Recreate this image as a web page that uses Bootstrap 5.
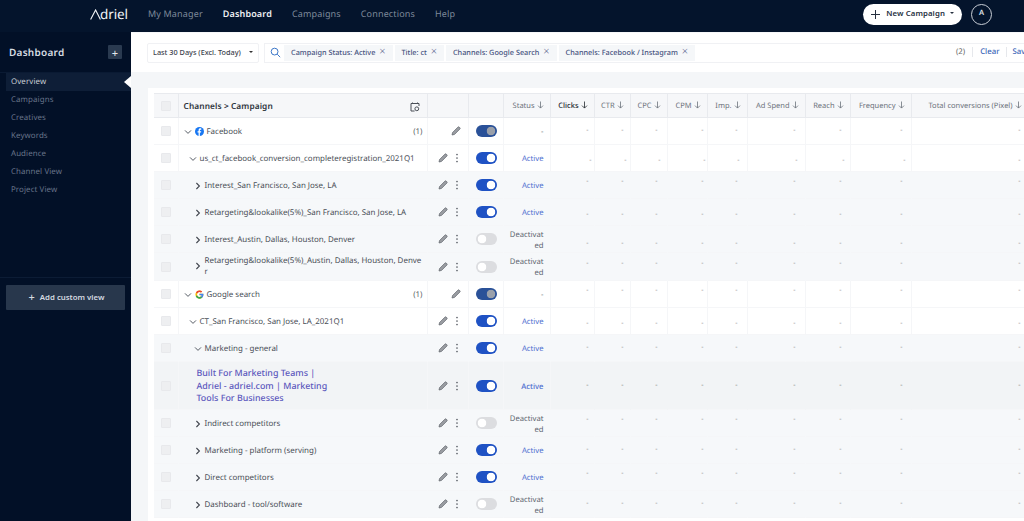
<!doctype html>
<html lang="en">
<head>
<meta charset="utf-8">
<title>Adriel Dashboard</title>
<link href="https://cdn.jsdelivr.net/npm/bootstrap@5.3.0/dist/css/bootstrap.min.css" rel="stylesheet">
<style>
html,body{height:100%}
body{font-family:"Noto Sans",sans-serif;font-size:8px;color:#4a4f57;background:#fff;overflow:hidden;text-rendering:geometricPrecision}
.topbar{height:32px;background:#04142c;padding:0 0 4px;flex-wrap:nowrap}
.brand{width:148px;padding:0 0 0 90px;margin:0;color:#f2f4f7;font-size:13.5px;line-height:18px;letter-spacing:-.1px;display:flex;align-items:center}
.brand svg{width:11px;height:11px;margin-right:-1px}
.topbar .nav-link{padding:0;font-size:9px;color:#7f8a9b;letter-spacing:.15px;line-height:14px}
.topbar .nav-link.active{color:#eef0f3;font-weight:600}
.topnav{gap:20px}
.new-btn{height:21px;width:99px;background:#fff;border-radius:11px;border:0;color:#26303f;font-size:7.8px;font-weight:600;padding:0;letter-spacing:.1px}
.new-btn::after{border-width:2px 2px 0;margin-left:5px;vertical-align:2px}
.avatar{width:21px;height:21px;border:1px solid #c9ced6;color:#dfe3e8;font-size:7.5px;font-weight:600;margin:0 32px 0 9px}
.side{width:131px;background:#021027;flex:none;height:489px}
.side-head{height:41px;padding:0 9px 0 9px;border-bottom:1px solid #0a1a33}
.side-head h1{font-size:10px;font-weight:600;color:#d8dde3;letter-spacing:.25px;margin:0}
.plus{width:14px;height:14px;background:#2a3a50;color:#e4e8ec;border:0;border-radius:1px;padding:0;font-size:11px;line-height:13px}
.side .list-group-item{background:transparent;border:0;border-radius:0;padding:0 0 0 5px;margin-left:6px;height:18px;line-height:19px;font-size:7.9px;color:#68748a;letter-spacing:.1px}
.side .list-group-item.active{background:#0e1e37;color:#c8ced6;position:relative}
.side .list-group-item.active::after{content:"";position:absolute;right:0;top:3px;border:6px solid transparent;border-right-color:#fff;border-left-width:0;border-right-width:7px}
.side-foot{border-top:1px solid #0c1c35;padding:7px 6px 0;margin-top:auto;height:244px}
.add-btn{width:119px;height:25px;background:#28374c;color:#d5dae0;border:0;border-radius:1px;font-size:7.8px;font-weight:600;padding:0 0 0 2px}
.add-btn b{font-weight:500;font-size:11px;margin-right:3px;line-height:1;vertical-align:-1px}
.main{background:#f4f6f8;height:489px;min-width:0}
.toolbar{height:40px;background:#fff;flex:none;padding:0 0 0 16px;gap:5px;border-top:1px solid #f6f7f9}
.date{width:112px;height:20px;border:1px solid #f0f1f4;border-radius:2px;color:#3b424c;font-size:7.3px;font-weight:500;padding:0 0 0 5px;background:#fff;white-space:nowrap}
.date::after{border-width:2px 2px 0;margin-left:8px;color:#333;vertical-align:2px}
.search{height:20px;border:1px solid #f0f1f4;border-right:0;flex:1;min-width:0;padding-left:5px;white-space:nowrap}
.search svg.mag{width:11px;height:11px;margin-right:3px;flex:none}
.chip{height:16px;line-height:16px;background:#f5f7f9;color:#46527e;font-size:7.3px;font-weight:500;padding:0 7px 0 7px;margin-right:2px;flex:none;white-space:nowrap}
.chip i{font-style:normal;font-size:11px;color:#56608a;margin-left:2px;font-weight:300;line-height:1;vertical-align:-.5px}
.counts{margin-left:auto;font-size:7.8px;white-space:nowrap;width:68px;flex:none;color:#666}
.counts a{color:#3d67b9;text-decoration:none;font-weight:500;border-left:1px solid #e6e8ec;padding-left:7px}
.counts span{margin-right:7px}
.counts a+a{margin-left:7px;padding-left:5px}
.card-wrap{margin:16px 0 0 17px;padding:5px 0 0 6px;background:#fff;flex:1;overflow:hidden;border:0;border-radius:0}
table.grid{table-layout:fixed;width:874px;margin:0;border-collapse:collapse;color:#4a4f57;font-size:8px;--bs-table-bg:transparent;--bs-table-color:#4a4f57}
.grid th,.grid td{padding:0;border:0;vertical-align:middle;background:transparent;box-shadow:none}
.grid thead tr{height:24px;background:#f6f7f9}
.grid thead th{font-weight:400;color:#6c727b;font-size:7.5px;text-align:right;border:solid #e8eaee;border-width:1px 1px 1px 0;padding:3px 6px 0 0;white-space:nowrap}
.grid thead th.name{text-align:left;color:#2f353d;font-weight:600;font-size:8.3px;padding-left:5px;padding-right:7px;letter-spacing:.1px}
.grid thead th.sel{color:#23282f;font-weight:500}
.grid th svg.ar{width:7px;height:8px;vertical-align:-1px;margin-left:0}
.grid tbody tr{height:27px;border-bottom:1px solid #f5f6f8}
.grid tbody tr.h2{height:48px}
.grid tbody tr.h28{height:28px}
.grid tbody tr.alt{background:#f6f8fa}
.grid tbody tr.dk{background:#f2f4f6}
.grid tbody td{border-right:1px solid #f5f6f8}
.grid tbody td:nth-child(n+6),.grid tbody tr.alt td{border-right-color:transparent}
tr.top td:nth-child(n+5),tr.seg td:nth-child(n+5){border-right-color:#f5f6f8!important}
td.cb,th.cb{text-align:center;padding:0!important}
.box{display:block;width:10px;height:10px;background:#eeeff1;border:1px solid #e8e9ec;border-radius:1px;margin:0 auto 0 7px}
.nm{display:flex;align-items:center;width:100%;font-size:7.95px;line-height:11px;word-break:break-all;padding:3px 7px 0 0}
.h28 .nm{padding:1px 3px 0 15px}
.l1{padding-left:5px}.l2{padding-left:10px}.l3{padding-left:15px}
.chev{width:8px;height:8px;flex:none;margin:0 3px 2px 0}
.brandico{width:9px;height:9px;flex:none;margin:0 3px 2px 0}
.ct{margin-left:auto;white-space:nowrap;color:#5a5f67;margin-right:-3px}
.adname{padding:1px 0 0 18px;color:#5c58bd;font-size:8.9px;line-height:12.4px;width:153px}
.acts{display:flex;align-items:center;justify-content:flex-end;padding-right:7px;gap:5px}
.pen{width:10px;height:10px}
.dots{width:8px;height:10px}
td.tg-c{padding-left:7px!important}
.form-switch.tg-w{min-height:0;padding:0;margin:0;line-height:0}
.form-switch .form-check-input.tg{width:21px;height:12px;margin:0;float:none;border:0;border-radius:6px;background-color:#dcdde0;background-image:radial-gradient(circle,#fff 4px,transparent 4.6px);background-size:12px 12px;background-position:left center;background-repeat:no-repeat;opacity:1}
.form-switch .form-check-input.tg:checked{background-color:#1f52c4;background-position:right center}
.form-switch .form-check-input.tg.grp:checked{background-color:#2a5198;background-image:radial-gradient(circle,#9aa0aa 4px,transparent 4.6px)}
td.st{text-align:right;padding:3px 6px 0 3px!important;word-break:break-all;line-height:10.6px;font-size:7.7px;color:#5f6670}
td.st.on{color:#4f6fd0}
td.n{text-align:right;color:#888;font-size:7px;line-height:8px}
td.n:nth-child(6){padding-right:5px}
td.n:nth-child(7){padding-right:6px}
td.n:nth-child(8){padding-right:9px}
td.n:nth-child(9){padding-right:3px}
td.n:nth-child(10){padding-right:9px}
td.n:nth-child(11){padding-right:9px}
td.n:nth-child(12){padding-right:8px}
td.n:nth-child(13){padding-right:8px}
td.n:nth-child(14){padding-right:7px}
.up td.n{padding-bottom:6px}
.dn td.n{padding-top:6px}
.dn2 td.n{padding-top:9px}
.right2 td.n:nth-child(6){padding-right:2px}
.right2 td.n:nth-child(7){padding-right:3px}
.right2 td.n:nth-child(8){padding-right:6px}
.right2 td.n:nth-child(9){padding-right:1px}
.right2 td.n:nth-child(10){padding-right:7px}
.right2 td.n:nth-child(11){padding-right:7px}
.right2 td.n:nth-child(12){padding-right:5px}
.right2 td.n:nth-child(13){padding-right:5px}
</style>
</head>
<body>
<svg width="0" height="0" class="d-block" aria-hidden="true">
  <symbol id="pen" viewBox="0 0 12 12"><path d="M1.200 10.800l.7-3L8.400 1.300a1 1 0 0 1 1.400 0l.9.9a1 1 0 0 1 0 1.400L4.200 10.100z" fill="#9a9da2" stroke="#65696f" stroke-width=".9" stroke-linejoin="round"/></symbol>
  <symbol id="dots" viewBox="0 0 8 10"><circle cx="4" cy="1.500" r=".85" fill="#5c6068"/><circle cx="4" cy="5" r=".85" fill="#5c6068"/><circle cx="4" cy="8.500" r=".85" fill="#5c6068"/></symbol>
  <symbol id="cd" viewBox="0 0 8 8"><path d="M1 2.400l3 3 3-3" fill="none" stroke="#555b64" stroke-width="1"/></symbol>
  <symbol id="cr" viewBox="0 0 8 8"><path d="M2.400 1l3 3-3 3" fill="none" stroke="#40454d" stroke-width="1.100"/></symbol>
  <symbol id="ar" viewBox="0 0 7 8"><path d="M3.500.5v6.500M1 4.600l2.500 2.500L6 4.600" fill="none" stroke="currentColor" stroke-width=".8"/></symbol>
</svg>

<nav class="navbar topbar d-flex align-items-center">
  <a class="navbar-brand brand" href="#" aria-label="Adriel"><svg viewBox="0 0 11 11"><path d="M.6 10.600L5.600 1l4.800 9.600" fill="none" stroke="#f2f4f7" stroke-width="1.100"/></svg><span>driel</span></a>
  <ul class="nav topnav flex-nowrap">
    <li class="nav-item"><a class="nav-link" href="#">My Manager</a></li>
    <li class="nav-item"><a class="nav-link active" href="#">Dashboard</a></li>
    <li class="nav-item"><a class="nav-link" href="#">Campaigns</a></li>
    <li class="nav-item"><a class="nav-link" href="#">Connections</a></li>
    <li class="nav-item"><a class="nav-link" href="#">Help</a></li>
  </ul>
  <div class="ms-auto d-flex align-items-center">
    <button class="btn new-btn dropdown-toggle" type="button"><svg width="9" height="9" viewBox="0 0 9 9" class="me-1"><path d="M4.500 0v9M0 4.500h9" stroke="#26303f" stroke-width="1"/></svg> New Campaign</button>
    <div class="avatar rounded-circle d-flex align-items-center justify-content-center">A</div>
  </div>
</nav>

<div class="d-flex">
  <aside class="side d-flex flex-column">
    <div class="side-head d-flex align-items-center justify-content-between">
      <h1>Dashboard</h1>
      <button class="btn plus" type="button">+</button>
    </div>
    <div class="list-group">
      <a href="#" class="list-group-item active">Overview</a>
      <a href="#" class="list-group-item">Campaigns</a>
      <a href="#" class="list-group-item">Creatives</a>
      <a href="#" class="list-group-item">Keywords</a>
      <a href="#" class="list-group-item">Audience</a>
      <a href="#" class="list-group-item">Channel View</a>
      <a href="#" class="list-group-item">Project View</a>
    </div>
    <div class="side-foot">
      <button class="btn add-btn" type="button"><b>+</b> Add custom view</button>
    </div>
  </aside>

  <main class="main flex-grow-1 d-flex flex-column">
    <div class="toolbar d-flex align-items-center">
      <button class="btn date dropdown-toggle text-start" type="button">Last 30 Days (Excl. Today)</button>
      <div class="search d-flex align-items-center">
        <svg class="mag" viewBox="0 0 11 11"><circle cx="4.600" cy="4.600" r="3.400" fill="none" stroke="#3d78c9" stroke-width="1"/><path d="M7.200 7.200l3 3" stroke="#3d78c9" stroke-width="1"/></svg>
        <span class="chip">Campaign Status: Active <i>×</i></span>
        <span class="chip">Title: ct <i>×</i></span>
        <span class="chip">Channels: Google Search <i>×</i></span>
        <span class="chip">Channels: Facebook / Instagram <i>×</i></span>
        <div class="counts"><span>(2)</span><a href="#">Clear</a><a href="#">Save</a></div>
      </div>
    </div>

    <div class="card card-wrap">
      <table class="table grid">
        <colgroup><col style="width:24px"><col style="width:249px"><col style="width:41px"><col style="width:35px"><col style="width:47px"><col style="width:44px"><col style="width:36px"><col style="width:37px"><col style="width:40px"><col style="width:40px"><col style="width:58px"><col style="width:45px"><col style="width:61px"><col style="width:117px"></colgroup>
        <thead>
          <tr>
            <th class="cb"><span class="box"></span></th>
            <th class="name"><div class="d-flex justify-content-between align-items-center">Channels &gt; Campaign <svg width="10" height="10" viewBox="0 0 10 10"><path d="M1 1.500h8M1 1.500v7.500h3.600M9 1.500v2.500M2.500 .5v1.500M7.500 .5v1.500" fill="none" stroke="#4a4f57" stroke-width="1"/><circle cx="6.800" cy="6.800" r="1.900" fill="none" stroke="#4a4f57" stroke-width="1"/></svg></div></th>
            <th></th><th></th>
            <th>Status <svg class="ar"><use href="#ar"/></svg></th>
            <th class="sel">Clicks <svg class="ar"><use href="#ar"/></svg></th>
            <th>CTR <svg class="ar"><use href="#ar"/></svg></th>
            <th>CPC <svg class="ar"><use href="#ar"/></svg></th>
            <th>CPM <svg class="ar"><use href="#ar"/></svg></th>
            <th>Imp. <svg class="ar"><use href="#ar"/></svg></th>
            <th>Ad Spend <svg class="ar"><use href="#ar"/></svg></th>
            <th>Reach <svg class="ar"><use href="#ar"/></svg></th>
            <th>Frequency <svg class="ar"><use href="#ar"/></svg></th>
            <th>Total conversions (Pixel) <svg class="ar"><use href="#ar"/></svg></th>
          </tr>
        </thead>
        <tbody>
          <tr class="top">
            <td class="cb"><span class="box"></span></td>
            <td><div class="nm l1"><svg class="chev"><use href="#cd"/></svg><svg class="brandico" viewBox="0 0 10 10"><circle cx="5" cy="5" r="5" fill="#1877f2"/><path d="M5.400 10V6.200h1.300l.2-1.500H5.400v-.9c0-.5.2-.8.8-.8h.8V1.600C6.800 1.500 6.400 1.500 6 1.500 4.800 1.500 4 2.200 4 3.600v1.100H2.800v1.500H4V10z" fill="#fff"/></svg>Facebook<span class="ct">(1)</span></div></td>
            <td><div class="acts"><svg class="pen"><use href="#pen"/></svg></div></td>
            <td class="tg-c"><div class="form-check form-switch tg-w"><input class="form-check-input tg grp" type="checkbox" role="switch" checked aria-label="Toggle"></div></td>
            <td class="st">-</td>
            <td class="n">-</td><td class="n">-</td><td class="n">-</td><td class="n">-</td><td class="n">-</td><td class="n">-</td><td class="n">-</td><td class="n">-</td><td class="n">-</td>
          </tr>
          <tr class="seg right2 dn">
            <td class="cb"><span class="box"></span></td>
            <td><div class="nm l2"><svg class="chev"><use href="#cd"/></svg>us_ct_facebook_conversion_completeregistration_2021Q1</div></td>
            <td><div class="acts"><svg class="pen"><use href="#pen"/></svg><svg class="dots"><use href="#dots"/></svg></div></td>
            <td class="tg-c"><div class="form-check form-switch tg-w"><input class="form-check-input tg" type="checkbox" role="switch" checked aria-label="Toggle"></div></td>
            <td class="st on">Active</td>
            <td class="n">-</td><td class="n">-</td><td class="n">-</td><td class="n">-</td><td class="n">-</td><td class="n">-</td><td class="n">-</td><td class="n">-</td><td class="n">-</td>
          </tr>
          <tr class="alt up">
            <td class="cb"><span class="box"></span></td>
            <td><div class="nm l3"><svg class="chev"><use href="#cr"/></svg>Interest_San Francisco, San Jose, LA</div></td>
            <td><div class="acts"><svg class="pen"><use href="#pen"/></svg><svg class="dots"><use href="#dots"/></svg></div></td>
            <td class="tg-c"><div class="form-check form-switch tg-w"><input class="form-check-input tg" type="checkbox" role="switch" checked aria-label="Toggle"></div></td>
            <td class="st on">Active</td>
            <td class="n">-</td><td class="n">-</td><td class="n">-</td><td class="n">-</td><td class="n">-</td><td class="n">-</td><td class="n">-</td><td class="n">-</td><td class="n">-</td>
          </tr>
          <tr class="alt dn">
            <td class="cb"><span class="box"></span></td>
            <td><div class="nm l3"><svg class="chev"><use href="#cr"/></svg>Retargeting&amp;lookalike(5%)_San Francisco, San Jose, LA</div></td>
            <td><div class="acts"><svg class="pen"><use href="#pen"/></svg><svg class="dots"><use href="#dots"/></svg></div></td>
            <td class="tg-c"><div class="form-check form-switch tg-w"><input class="form-check-input tg" type="checkbox" role="switch" checked aria-label="Toggle"></div></td>
            <td class="st on">Active</td>
            <td class="n">-</td><td class="n">-</td><td class="n">-</td><td class="n">-</td><td class="n">-</td><td class="n">-</td><td class="n">-</td><td class="n">-</td><td class="n">-</td>
          </tr>
          <tr class="alt dn2">
            <td class="cb"><span class="box"></span></td>
            <td><div class="nm l3"><svg class="chev"><use href="#cr"/></svg>Interest_Austin, Dallas, Houston, Denver</div></td>
            <td><div class="acts"><svg class="pen"><use href="#pen"/></svg><svg class="dots"><use href="#dots"/></svg></div></td>
            <td class="tg-c"><div class="form-check form-switch tg-w"><input class="form-check-input tg" type="checkbox" aria-label="Toggle"></div></td>
            <td class="st">Deactivated</td>
            <td class="n">-</td><td class="n">-</td><td class="n">-</td><td class="n">-</td><td class="n">-</td><td class="n">-</td><td class="n">-</td><td class="n">-</td><td class="n">-</td>
          </tr>
          <tr class="alt up h28">
            <td class="cb"><span class="box"></span></td>
            <td><div class="nm"><svg class="chev"><use href="#cr"/></svg><span>Retargeting&amp;lookalike(5%)_Austin, Dallas, Houston, Denver</span></div></td>
            <td><div class="acts"><svg class="pen"><use href="#pen"/></svg><svg class="dots"><use href="#dots"/></svg></div></td>
            <td class="tg-c"><div class="form-check form-switch tg-w"><input class="form-check-input tg" type="checkbox" aria-label="Toggle"></div></td>
            <td class="st">Deactivated</td>
            <td class="n">-</td><td class="n">-</td><td class="n">-</td><td class="n">-</td><td class="n">-</td><td class="n">-</td><td class="n">-</td><td class="n">-</td><td class="n">-</td>
          </tr>
          <tr class="top up">
            <td class="cb"><span class="box"></span></td>
            <td><div class="nm l1"><svg class="chev"><use href="#cd"/></svg><svg class="brandico" viewBox="0 0 48 48"><path d="M44.500 20H24v8.500h11.800C34.700 33.900 30.100 37 24 37c-7.200 0-13-5.800-13-13s5.800-13 13-13c3.100 0 5.900 1.100 8.100 2.900l6.400-6.400C34.600 4.100 29.600 2 24 2 11.800 2 2 11.800 2 24s9.800 22 22 22c11 0 21-8 21-22 0-1.300-.2-2.700-.5-4z" fill="#fbbc05"/><path d="M5.300 13.700l7 5.100C14.200 14.800 18.700 11 24 11c3.100 0 5.900 1.100 8.100 2.900l6.400-6.400C34.600 4.100 29.600 2 24 2 15.500 2 8.200 6.800 5.300 13.700z" fill="#ea4335"/><path d="M24 46c5.500 0 10.500-1.900 14.400-5.100l-6.900-5.700C29.500 36.400 26.900 37 24 37c-6 0-11.100-4-12.900-9.500l-7 5.400C7.600 40.600 15.200 46 24 46z" fill="#34a853"/><path d="M44.500 20H24v8.500h11.800c-.6 2.700-2.100 5-4.300 6.700l6.900 5.700C42.400 37.200 45 31.300 45 24c0-1.300-.2-2.700-.5-4z" fill="#4285f4"/></svg>Google search<span class="ct">(1)</span></div></td>
            <td><div class="acts"><svg class="pen"><use href="#pen"/></svg></div></td>
            <td class="tg-c"><div class="form-check form-switch tg-w"><input class="form-check-input tg grp" type="checkbox" role="switch" checked aria-label="Toggle"></div></td>
            <td class="st">-</td>
            <td class="n">-</td><td class="n">-</td><td class="n">-</td><td class="n">-</td><td class="n">-</td><td class="n">-</td><td class="n">-</td><td class="n">-</td><td class="n">-</td>
          </tr>
          <tr class="seg dn">
            <td class="cb"><span class="box"></span></td>
            <td><div class="nm l2"><svg class="chev"><use href="#cd"/></svg>CT_San Francisco, San Jose, LA_2021Q1</div></td>
            <td><div class="acts"><svg class="pen"><use href="#pen"/></svg><svg class="dots"><use href="#dots"/></svg></div></td>
            <td class="tg-c"><div class="form-check form-switch tg-w"><input class="form-check-input tg" type="checkbox" role="switch" checked aria-label="Toggle"></div></td>
            <td class="st on">Active</td>
            <td class="n">-</td><td class="n">-</td><td class="n">-</td><td class="n">-</td><td class="n">-</td><td class="n">-</td><td class="n">-</td><td class="n">-</td><td class="n">-</td>
          </tr>
          <tr class="alt">
            <td class="cb"><span class="box"></span></td>
            <td><div class="nm l3"><svg class="chev"><use href="#cd"/></svg>Marketing - general</div></td>
            <td><div class="acts"><svg class="pen"><use href="#pen"/></svg><svg class="dots"><use href="#dots"/></svg></div></td>
            <td class="tg-c"><div class="form-check form-switch tg-w"><input class="form-check-input tg" type="checkbox" role="switch" checked aria-label="Toggle"></div></td>
            <td class="st on">Active</td>
            <td class="n">-</td><td class="n">-</td><td class="n">-</td><td class="n">-</td><td class="n">-</td><td class="n">-</td><td class="n">-</td><td class="n">-</td><td class="n">-</td>
          </tr>
          <tr class="dk h2">
            <td class="cb"><span class="box"></span></td>
            <td><div class="adname">Built For Marketing Teams | Adriel - adriel.com | Marketing Tools For Businesses</div></td>
            <td><div class="acts"><svg class="pen"><use href="#pen"/></svg><svg class="dots"><use href="#dots"/></svg></div></td>
            <td class="tg-c"><div class="form-check form-switch tg-w"><input class="form-check-input tg" type="checkbox" role="switch" checked aria-label="Toggle"></div></td>
            <td class="st on">Active</td>
            <td class="n">-</td><td class="n">-</td><td class="n">-</td><td class="n">-</td><td class="n">-</td><td class="n">-</td><td class="n">-</td><td class="n">-</td><td class="n">-</td>
          </tr>
          <tr class="alt up">
            <td class="cb"><span class="box"></span></td>
            <td><div class="nm l3"><svg class="chev"><use href="#cr"/></svg>Indirect competitors</div></td>
            <td><div class="acts"><svg class="pen"><use href="#pen"/></svg><svg class="dots"><use href="#dots"/></svg></div></td>
            <td class="tg-c"><div class="form-check form-switch tg-w"><input class="form-check-input tg" type="checkbox" aria-label="Toggle"></div></td>
            <td class="st">Deactivated</td>
            <td class="n">-</td><td class="n">-</td><td class="n">-</td><td class="n">-</td><td class="n">-</td><td class="n">-</td><td class="n">-</td><td class="n">-</td><td class="n">-</td>
          </tr>
          <tr class="alt">
            <td class="cb"><span class="box"></span></td>
            <td><div class="nm l3"><svg class="chev"><use href="#cr"/></svg>Marketing - platform (serving)</div></td>
            <td><div class="acts"><svg class="pen"><use href="#pen"/></svg><svg class="dots"><use href="#dots"/></svg></div></td>
            <td class="tg-c"><div class="form-check form-switch tg-w"><input class="form-check-input tg" type="checkbox" role="switch" checked aria-label="Toggle"></div></td>
            <td class="st on">Active</td>
            <td class="n">-</td><td class="n">-</td><td class="n">-</td><td class="n">-</td><td class="n">-</td><td class="n">-</td><td class="n">-</td><td class="n">-</td><td class="n">-</td>
          </tr>
          <tr class="alt up">
            <td class="cb"><span class="box"></span></td>
            <td><div class="nm l3"><svg class="chev"><use href="#cr"/></svg>Direct competitors</div></td>
            <td><div class="acts"><svg class="pen"><use href="#pen"/></svg><svg class="dots"><use href="#dots"/></svg></div></td>
            <td class="tg-c"><div class="form-check form-switch tg-w"><input class="form-check-input tg" type="checkbox" role="switch" checked aria-label="Toggle"></div></td>
            <td class="st on">Active</td>
            <td class="n">-</td><td class="n">-</td><td class="n">-</td><td class="n">-</td><td class="n">-</td><td class="n">-</td><td class="n">-</td><td class="n">-</td><td class="n">-</td>
          </tr>
          <tr class="alt">
            <td class="cb"><span class="box"></span></td>
            <td><div class="nm l3"><svg class="chev"><use href="#cr"/></svg>Dashboard - tool/software</div></td>
            <td><div class="acts"><svg class="pen"><use href="#pen"/></svg><svg class="dots"><use href="#dots"/></svg></div></td>
            <td class="tg-c"><div class="form-check form-switch tg-w"><input class="form-check-input tg" type="checkbox" aria-label="Toggle"></div></td>
            <td class="st">Deactivated</td>
            <td class="n">-</td><td class="n">-</td><td class="n">-</td><td class="n">-</td><td class="n">-</td><td class="n">-</td><td class="n">-</td><td class="n">-</td><td class="n">-</td>
          </tr>
        </tbody>
      </table>
    </div>
  </main>
</div>
<script src="https://cdn.jsdelivr.net/npm/bootstrap@5.3.0/dist/js/bootstrap.bundle.min.js"></script>
</body>
</html>
